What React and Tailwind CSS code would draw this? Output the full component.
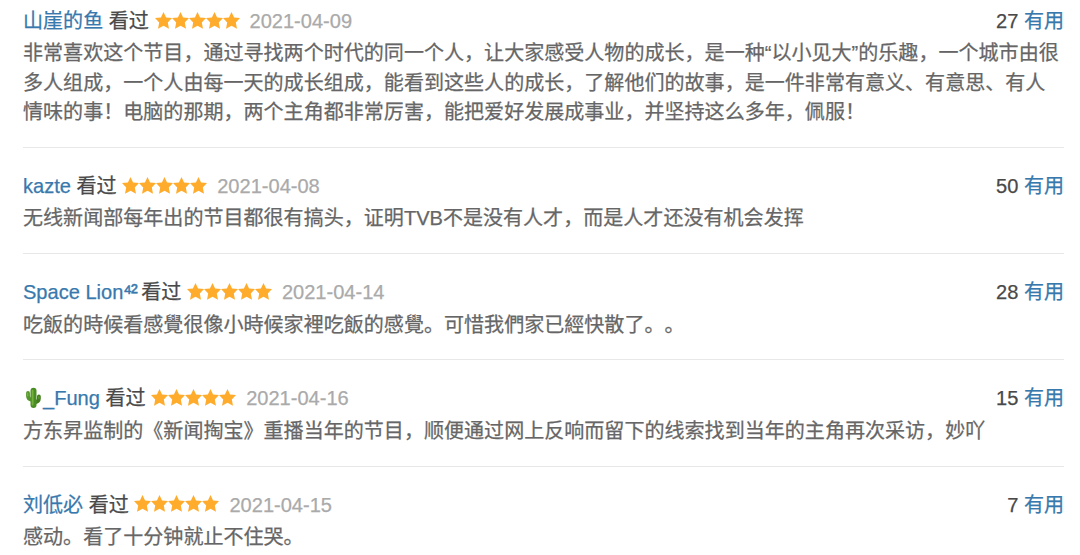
import React from "react";

const comments = [
  {
    id: 1,
    name: "山崖的鱼",
    date: "2021-04-09",
    votes: 27,
    lines: [
      "非常喜欢这个节目，通过寻找两个时代的同一个人，让大家感受人物的成长，是一种“以小见大”的乐趣，一个城市由很",
      "多人组成，一个人由每一天的成长组成，能看到这些人的成长，了解他们的故事，是一件非常有意义、有意思、有人",
      "情味的事！电脑的那期，两个主角都非常厉害，能把爱好发展成事业，并坚持这么多年，佩服！",
    ],
  },
  {
    id: 2,
    name: "kazte",
    date: "2021-04-08",
    votes: 50,
    lines: ["无线新闻部每年出的节目都很有搞头，证明TVB不是没有人才，而是人才还没有机会发挥"],
  },
  {
    id: 3,
    name: "Space Lion",
    suffix: "⁴²",
    date: "2021-04-14",
    votes: 28,
    lines: ["吃飯的時候看感覺很像小時候家裡吃飯的感覺。可惜我們家已經快散了。。"],
  },
  {
    id: 4,
    name: "_Fung",
    cactus: true,
    date: "2021-04-16",
    votes: 15,
    lines: ["方东昇监制的《新闻掏宝》重播当年的节目，顺便通过网上反响而留下的线索找到当年的主角再次采访，妙吖"],
  },
  {
    id: 5,
    name: "刘低必",
    date: "2021-04-15",
    votes: 7,
    lines: ["感动。看了十分钟就止不住哭。"],
  },
];

const Star = () => (
  <svg viewBox="0 0 17 17" className="h-[17px] w-[17px] shrink-0" fill="#ffac2d">
    <path d="M8.5 0 L11.1 5.5 L17 6.1 L12.8 10.4 L14 16.8 L8.5 13.8 L3 16.8 L4.2 10.4 L0 6.1 L5.9 5.5 Z" />
  </svg>
);

const Cactus = () => (
  <svg viewBox="0 0 20 22" className="mb-[3px] h-[22px] w-5 shrink-0" fill="none" strokeLinecap="round">
    <path d="M5 6 V9 Q5 12.4 9 12.8" stroke="#56962a" strokeWidth="3.8" />
    <path d="M15.9 9.5 V11.5 Q15.9 15 11 15.3" stroke="#447d20" strokeWidth="3.8" />
    <path d="M10.5 3.8 V18" stroke="#4b8d25" strokeWidth="6" />
    <path d="M9.6 3.6 V17.5" stroke="#72b23b" strokeWidth="1.8" />
    <path d="M4.7 6 V9" stroke="#78b640" strokeWidth="1.2" />
    <path d="M15.9 9.5 V11.5" stroke="#63a132" strokeWidth="1" />
  </svg>
);

const Comment = ({ comment }) => (
  <li className="border-b border-[#e8e8e8] pt-[24px] pb-[19.6px] first:pt-0 last:border-b-0">
    <div className="mb-[3px] flex h-[29.4px] items-center justify-between">
      <div className="flex items-center">
        <a className="flex items-center text-[#3879ad]">
          {comment.cactus && <Cactus />}
          {comment.name}
          {comment.suffix && (
            <span className="-mr-px tracking-[-1px] [-webkit-text-stroke:0.5px_currentColor]">{comment.suffix}</span>
          )}
        </a>
        <span className="ml-[5.6px] text-[#494949]">看过</span>
        <span className="mb-[3px] ml-[5.6px] flex">
          {[1, 2, 3, 4, 5].map((n) => (
            <Star key={n} />
          ))}
        </span>
        <span className="ml-[10px] text-[#aaaaaa]">{comment.date}</span>
      </div>
      <div className="flex gap-[5.6px]">
        <span className="text-[#494949]">{comment.votes}</span>
        <a className="text-[#3879ad]">有用</a>
      </div>
    </div>
    <p className="text-[#666666]">
      {comment.lines.map((line) => (
        <span key={line} className="block">
          {line}
        </span>
      ))}
    </p>
  </li>
);

const App = () => {
  return (
    <div className="h-[555px] overflow-hidden bg-white pt-[7px] pr-4 pl-[23px]">
      <ul
        lang="zh-CN"
        className="font-['Liberation_Sans','Noto_Sans_CJK_SC',sans-serif] text-[20.06px] leading-[29.3px] whitespace-nowrap [text-spacing-trim:space-all] [-webkit-text-stroke:0.25px_currentColor]"
      >
        {comments.map((comment) => (
          <Comment key={comment.id} comment={comment} />
        ))}
      </ul>
    </div>
  );
};

export default App;
